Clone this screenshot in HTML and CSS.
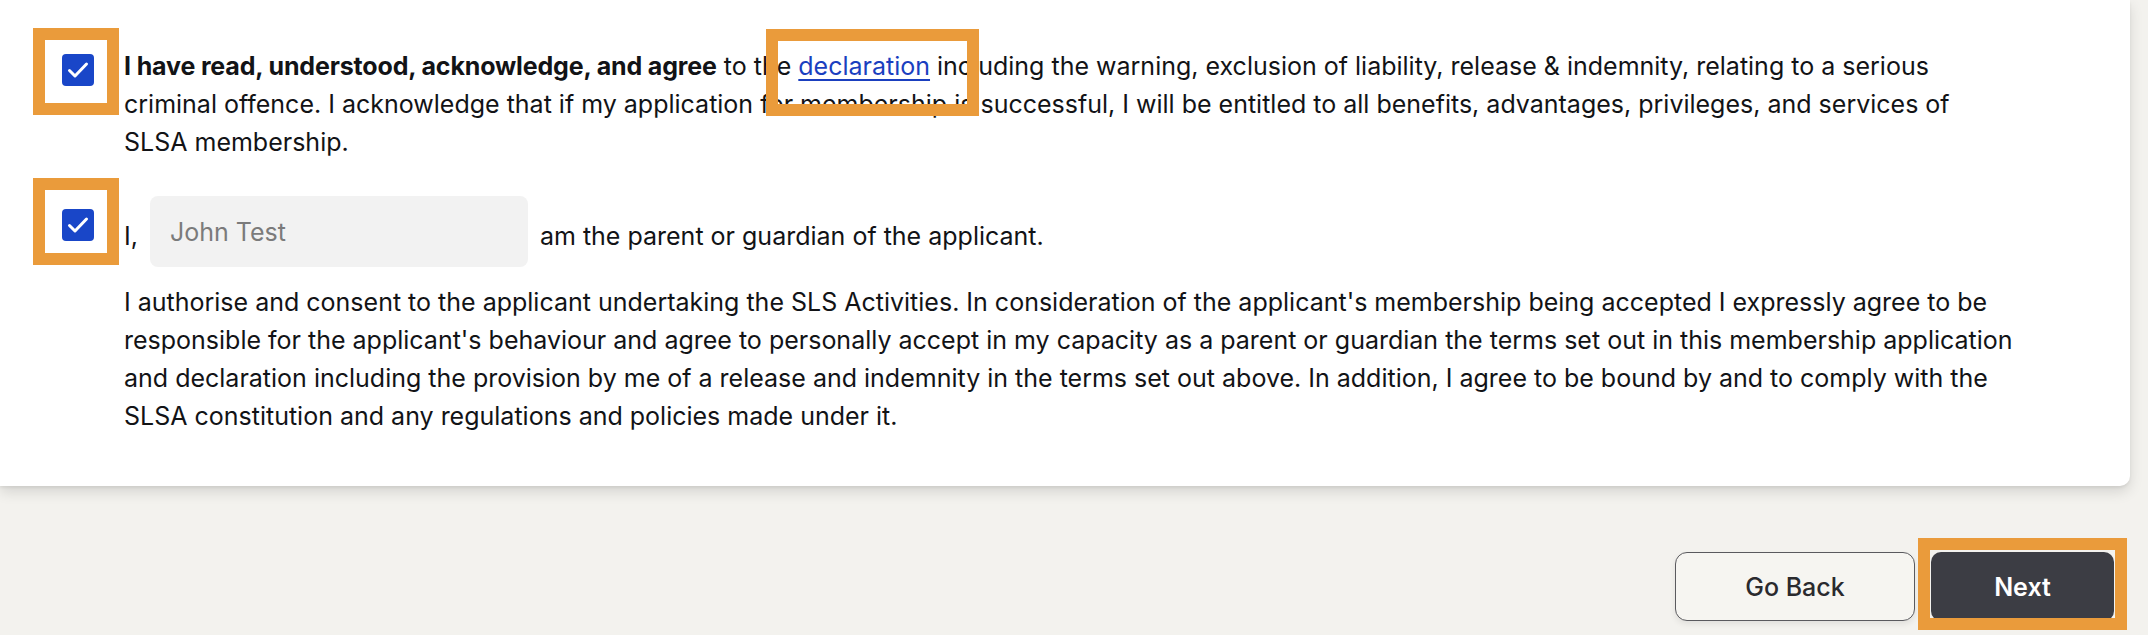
FILE: index.html
```html
<!DOCTYPE html>
<html lang="en">
<head>
<meta charset="utf-8">
<title>Declaration</title>
<link rel="stylesheet" href="styles.css">
</head>
<body>
<main class="page">
  <section class="card">
    <div class="row row-declaration">
      <span class="check-wrap">
        <span class="checkbox" role="checkbox" aria-checked="true">
          <svg viewBox="0 0 32 32" width="32" height="32" aria-hidden="true"><path d="M7.5 16.5l5.5 5.5L24.5 10" fill="none" stroke="#fff" stroke-width="3" stroke-linecap="round" stroke-linejoin="round"/></svg>
        </span>
        <span class="highlight hl-check1"></span>
      </span>
      <p class="text decl-text"><strong>I have read, understood, acknowledge, and agree</strong> to the <span class="link-wrap"><a href="#" class="link">declaration</a><span class="highlight hl-link"></span></span> including the warning, exclusion of liability, release &amp; indemnity, relating to a serious criminal offence. I acknowledge that if my application for membership is successful, I will be entitled to all benefits, advantages, privileges, and services of SLSA membership.</p>
    </div>

    <div class="row row-guardian">
      <span class="check-wrap check-guardian">
        <span class="checkbox" role="checkbox" aria-checked="true">
          <svg viewBox="0 0 32 32" width="32" height="32" aria-hidden="true"><path d="M7.5 16.5l5.5 5.5L24.5 10" fill="none" stroke="#fff" stroke-width="3" stroke-linecap="round" stroke-linejoin="round"/></svg>
        </span>
        <span class="highlight hl-check2"></span>
      </span>
      <div class="guardian-line">
        <span class="text">I,</span>
        <input class="name-input" type="text" placeholder="John Test">
        <span class="text">am the parent or guardian of the applicant.</span>
      </div>
    </div>

    <p class="text consent">I authorise and consent to the applicant undertaking the SLS Activities. In consideration of the applicant's membership being accepted I expressly agree to be responsible for the applicant's behaviour and agree to personally accept in my capacity as a parent or guardian the terms set out in this membership application and declaration including the provision by me of a release and indemnity in the terms set out above. In addition, I agree to be bound by and to comply with the SLSA constitution and any regulations and policies made under it.</p>
  </section>

  <nav class="actions">
    <button class="btn btn-back" type="button">Go Back</button>
    <span class="next-wrap">
      <button class="btn btn-next" type="button">Next</button>
      <span class="highlight hl-next"></span>
    </span>
  </nav>
</main>
</body>
</html>
```

FILE: styles.css
```css
* { box-sizing: border-box; }

html, body {
  margin: 0;
  padding: 0;
  background: #f3f2ee;
  font-family: Inter, "Noto Sans", "Liberation Sans", sans-serif;
  color: #121316;
}

.page {
  width: 2148px;
  height: 635px;
  overflow: hidden;
}

.card {
  width: 2130px;
  background: #ffffff;
  border-radius: 0 0 10px 0;
  box-shadow: 0 6px 14px rgba(0, 0, 0, 0.12), 0 2px 3px rgba(0, 0, 0, 0.06);
  padding: 47px 0 51px 62px;
}

.row {
  display: flex;
  gap: 30px;
}

.row-declaration {
  align-items: flex-start;
}

.text {
  font-size: 25px;
  line-height: 38px;
  margin: 0;
}

.decl-text {
  max-width: 1850px;
}

.decl-text strong {
  font-weight: 700;
  letter-spacing: -0.15px;
}

.check-wrap {
  position: relative;
  flex: 0 0 32px;
  height: 32px;
  margin-top: 7px;
}

.checkbox {
  display: block;
  width: 32px;
  height: 32px;
  background: #1946c8;
  border-radius: 4px;
}

.checkbox svg { display: block; }

.highlight {
  position: absolute;
  border: 12px solid #ea9b3b;
  pointer-events: none;
}

.hl-check1 {
  left: -29px;
  top: -26px;
  width: 86px;
  height: 87px;
}

.row-guardian {
  align-items: center;
  margin-top: 35px;
}

.check-guardian {
  margin-top: 0;
  margin-bottom: 14px;
}

.hl-check2 {
  left: -29px;
  top: -31px;
  width: 86px;
  height: 87px;
}

.guardian-line {
  display: flex;
  align-items: center;
  gap: 12px;
}

.guardian-line .text { margin-top: 8px; }

.name-input {
  width: 378px;
  height: 71px;
  border: none;
  border-radius: 8px;
  background: #f2f2f2;
  padding: 0 20px;
  font-family: inherit;
  font-size: 25px;
  color: #16171a;
}

.name-input::placeholder {
  color: #7b7b7b;
}

.link-wrap {
  position: relative;
}

.link {
  color: #1a3fbf;
  text-decoration: underline;
  text-underline-offset: 4px;
  text-decoration-thickness: 1.5px;
}

.hl-link {
  left: -32px;
  top: -22px;
  width: 213px;
  height: 87px;
}

.consent {
  margin: 16px 0 0 62px;
  max-width: 1900px;
}

.actions {
  display: flex;
  justify-content: flex-end;
  align-items: center;
  gap: 16px;
  padding: 66px 34px 0 0;
}

.btn {
  font-family: inherit;
  font-size: 25px;
  height: 69px;
  border-radius: 12px;
  cursor: pointer;
}

.btn-back {
  width: 240px;
  background: #f6f5f1;
  color: #2a2a2e;
  border: 1.5px solid #5a5a5e;
  font-weight: 500;
  box-shadow: 0 3px 6px rgba(0, 0, 0, 0.08);
}

.next-wrap {
  position: relative;
  display: block;
}

.btn-next {
  display: block;
  width: 183px;
  background: #3c3d44;
  color: #ffffff;
  border: none;
  border-radius: 10px;
  font-weight: 600;
}

.hl-next {
  left: -13px;
  top: -14px;
  width: 209px;
  height: 92px;
}
```
